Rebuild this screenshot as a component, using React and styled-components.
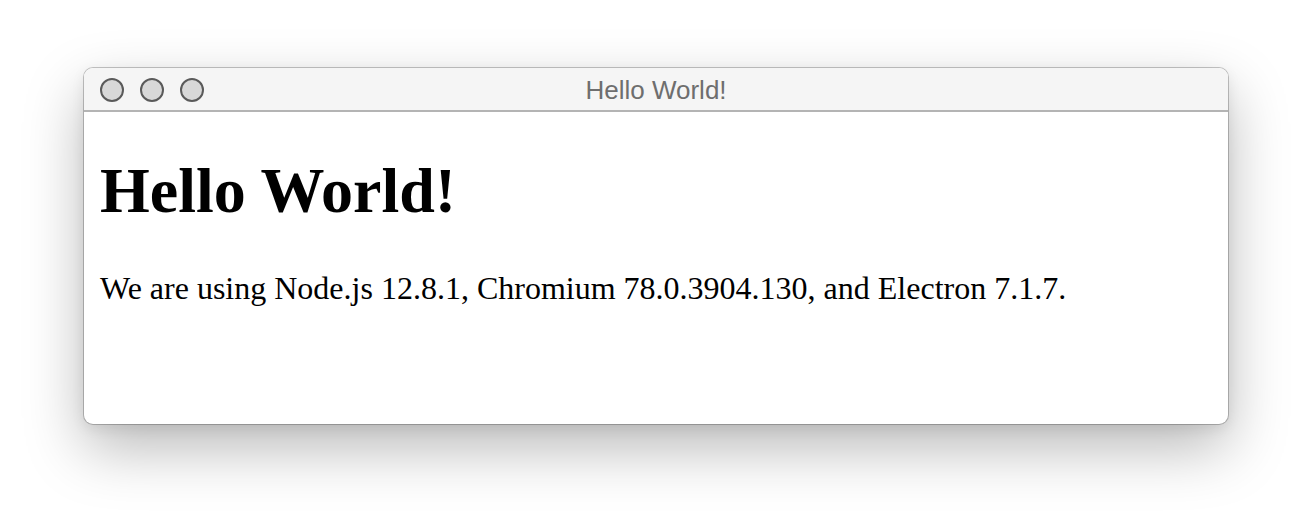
import React from 'react';
import styled, {createGlobalStyle} from 'styled-components';

const GlobalStyle = createGlobalStyle`
  html, body {
    margin: 0;
    padding: 0;
    background: #ffffff;
  }
`;

const Desktop = styled.div`
  display: flex;
  justify-content: center;
  padding: 68px 84px 100px;
`;

const Window = styled.div`
  flex: 1;
  height: 356px;
  display: flex;
  flex-direction: column;
  border-radius: 9px;
  overflow: hidden;
  background: #ffffff;
  box-shadow: 0 0 0 1px rgba(0, 0, 0, 0.22), 0 24px 60px rgba(0, 0, 0, 0.28),
    0 4px 14px rgba(0, 0, 0, 0.08);
`;

const TitleBar = styled.div`
  position: relative;
  flex: none;
  height: 42px;
  display: flex;
  align-items: center;
  justify-content: center;
  background: #f5f5f5;
  border-bottom: 2px solid #b4b4b4;
`;

const Lights = styled.div`
  position: absolute;
  left: 16px;
  top: 10px;
  display: flex;
  gap: 16px;
`;

const Light = styled.span`
  width: 20px;
  height: 20px;
  border-radius: 50%;
  background: #d8d8d8;
  border: 2px solid #5a5a5a;
`;

const Title = styled.div`
  font-family: 'Liberation Sans', Arial, sans-serif;
  font-size: 26px;
  color: #6e6e6e;
  margin-top: 2px;
`;

const Content = styled.div`
  flex: 1;
  padding: 1px 16px;
  font-family: 'Liberation Serif', 'Times New Roman', serif;
  font-size: 32px;
  color: #000000;
`;

const Heading = styled.h1`
  font-size: 64px;
  font-weight: bold;
  margin: 41px 0 42px;
`;

const Text = styled.p`
  margin: 0;
`;

export default function App() {
  return (
    <>
      <GlobalStyle />
      <Desktop>
        <Window>
          <TitleBar>
            <Lights>
              <Light />
              <Light />
              <Light />
            </Lights>
            <Title>Hello World!</Title>
          </TitleBar>
          <Content>
            <Heading>Hello World!</Heading>
            <Text>
              We are using Node.js 12.8.1, Chromium 78.0.3904.130, and Electron 7.1.7.
            </Text>
          </Content>
        </Window>
      </Desktop>
    </>
  );
}
